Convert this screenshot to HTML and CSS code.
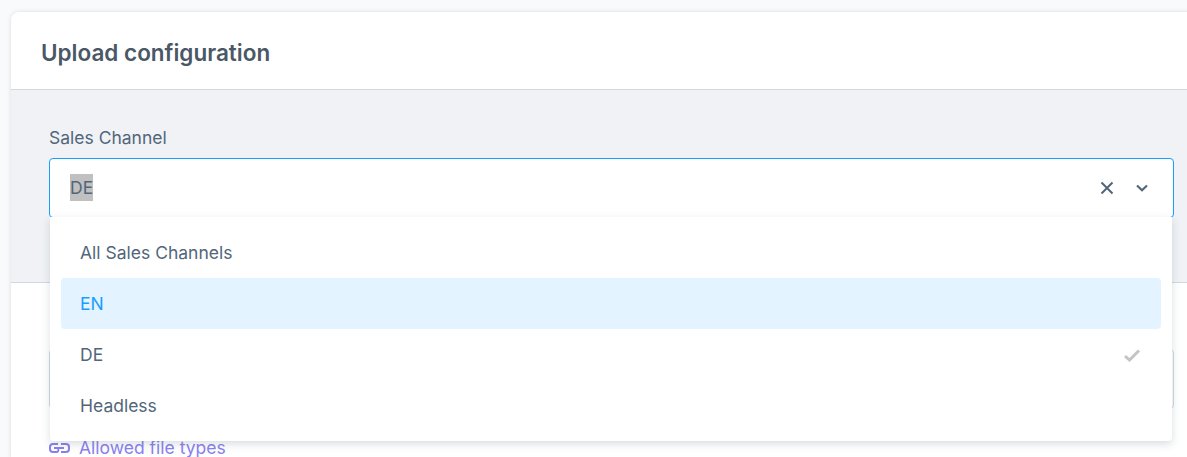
FILE: index.html
```html
<!DOCTYPE html>
<html lang="en">
<head>
    <meta charset="UTF-8">
    <title>Upload configuration</title>
    <link rel="stylesheet" href="styles.css">
</head>
<body>
    <div class="card">
        <div class="card-header">
            <h2>Upload configuration</h2>
        </div>

        <div class="card-section">
            <label class="field-label">Sales Channel</label>
            <div class="select">
                <div class="select-input">
                    <div class="select-value"><span class="selected-text">DE</span></div>
                    <svg class="icon-clear" width="16" height="16" viewBox="0 0 16 16">
                        <path d="M2.500 2.500l11 11M13.500 2.500l-11 11"/>
                    </svg>
                    <svg class="icon-chevron" width="12" height="8" viewBox="0 0 12 8">
                        <path d="M1 1.500L6 6.200l5-4.700"/>
                    </svg>
                </div>

                <!-- Open dropdown -->
                <ul class="select-menu">
                    <li class="select-option">All Sales Channels</li>
                    <li class="select-option active">EN</li>
                    <li class="select-option">
                        DE
                        <svg class="icon-check" width="18" height="14" viewBox="0 0 18 14">
                            <path d="M2 8l4.500 4L16 2.500"/>
                        </svg>
                    </li>
                    <li class="select-option">Headless</li>
                </ul>
            </div>
        </div>

        <div class="card-body">
            <div class="text-input"></div>
            <a class="link" href="#">
                <svg class="icon-link" width="21" height="12" viewBox="0 0 21 12">
                    <path d="M9 2H4a3 3 0 0 0-3 3v2a3 3 0 0 0 3 3h4a2 2 0 0 0 1-3M12 2h5a3 3 0 0 1 3 3v2a3 3 0 0 1-3 3h-5M5 6h10"/>
                </svg>
                Allowed file types
            </a>
        </div>
    </div>
</body>
</html>
```

FILE: styles.css
```css
html, body {
    height: 100%;
    overflow: hidden;
}

body {
    font-family: Inter, "Liberation Sans", sans-serif;
    margin: 0;
    padding: 12px 0 0 11px;
    background-color: #f9fafb;
    color: #52667a;
    font-size: 17.500px;
}

.card {
    width: 1201px;
    background-color: #fff;
    border-radius: 8px 8px 0 0;
    box-shadow: 0 0 4px rgba(120, 138, 155, 0.25);
}

.card-header {
    height: 78px;
    box-sizing: border-box;
    padding: 4px 30px 0;
    display: flex;
    align-items: center;
    border-bottom: 1px solid #d1d9e0;
}

.card-header h2 {
    margin: 0;
    font-size: 22.500px;
    font-weight: 600;
    color: #4a5866;
}

.card-section {
    height: 193px;
    box-sizing: border-box;
    padding: 36px 38px 0;
    background-color: #f0f2f5;
    border-bottom: 1px solid #d1d9e0;
}

.field-label {
    display: block;
    height: 32px;
    line-height: 24px;
}

.select {
    position: relative;
}

.select-input {
    height: 60px;
    box-sizing: border-box;
    padding: 0 25px 1px 20px;
    display: flex;
    align-items: center;
    background-color: #fff;
    border: 1px solid #189eff;
    border-radius: 4px;
}

.select-value {
    flex: 1;
}

.selected-text {
    display: inline-block;
    line-height: 27px;
    background-color: #c0c0c0;
}

.icon-clear {
    fill: none;
    stroke: #52667a;
    stroke-width: 2;
    margin-right: 21px;
}

.icon-chevron {
    fill: none;
    stroke: #52667a;
    stroke-width: 2.200;
    margin-top: 1px;
}

.select-menu {
    position: absolute;
    top: 59px;
    left: 1px;
    right: 2px;
    margin: 0;
    padding: 10px 11px;
    list-style: none;
    background-color: #fff;
    border-radius: 0 0 4px 4px;
    box-shadow: 0 3px 8px rgba(80, 100, 120, 0.22);
}

.select-option {
    height: 51px;
    padding: 0 20px 0 19px;
    display: flex;
    align-items: center;
    justify-content: space-between;
    border-radius: 4px;
}

.select-option.active {
    background-color: #e3f3ff;
    color: #189eff;
}

.icon-check {
    fill: none;
    stroke: #c4c4c4;
    stroke-width: 3;
}

.card-body {
    padding: 66px 38px 0;
}

.text-input {
    height: 60px;
    box-sizing: border-box;
    border: 1px solid #d1d9e0;
    border-radius: 4px;
}

.link {
    display: flex;
    align-items: center;
    gap: 9px;
    margin-top: 28px;
    color: #8a7ff0;
    text-decoration: none;
}

.icon-link {
    fill: none;
    stroke: #8a7ff0;
    stroke-width: 2;
}
```
